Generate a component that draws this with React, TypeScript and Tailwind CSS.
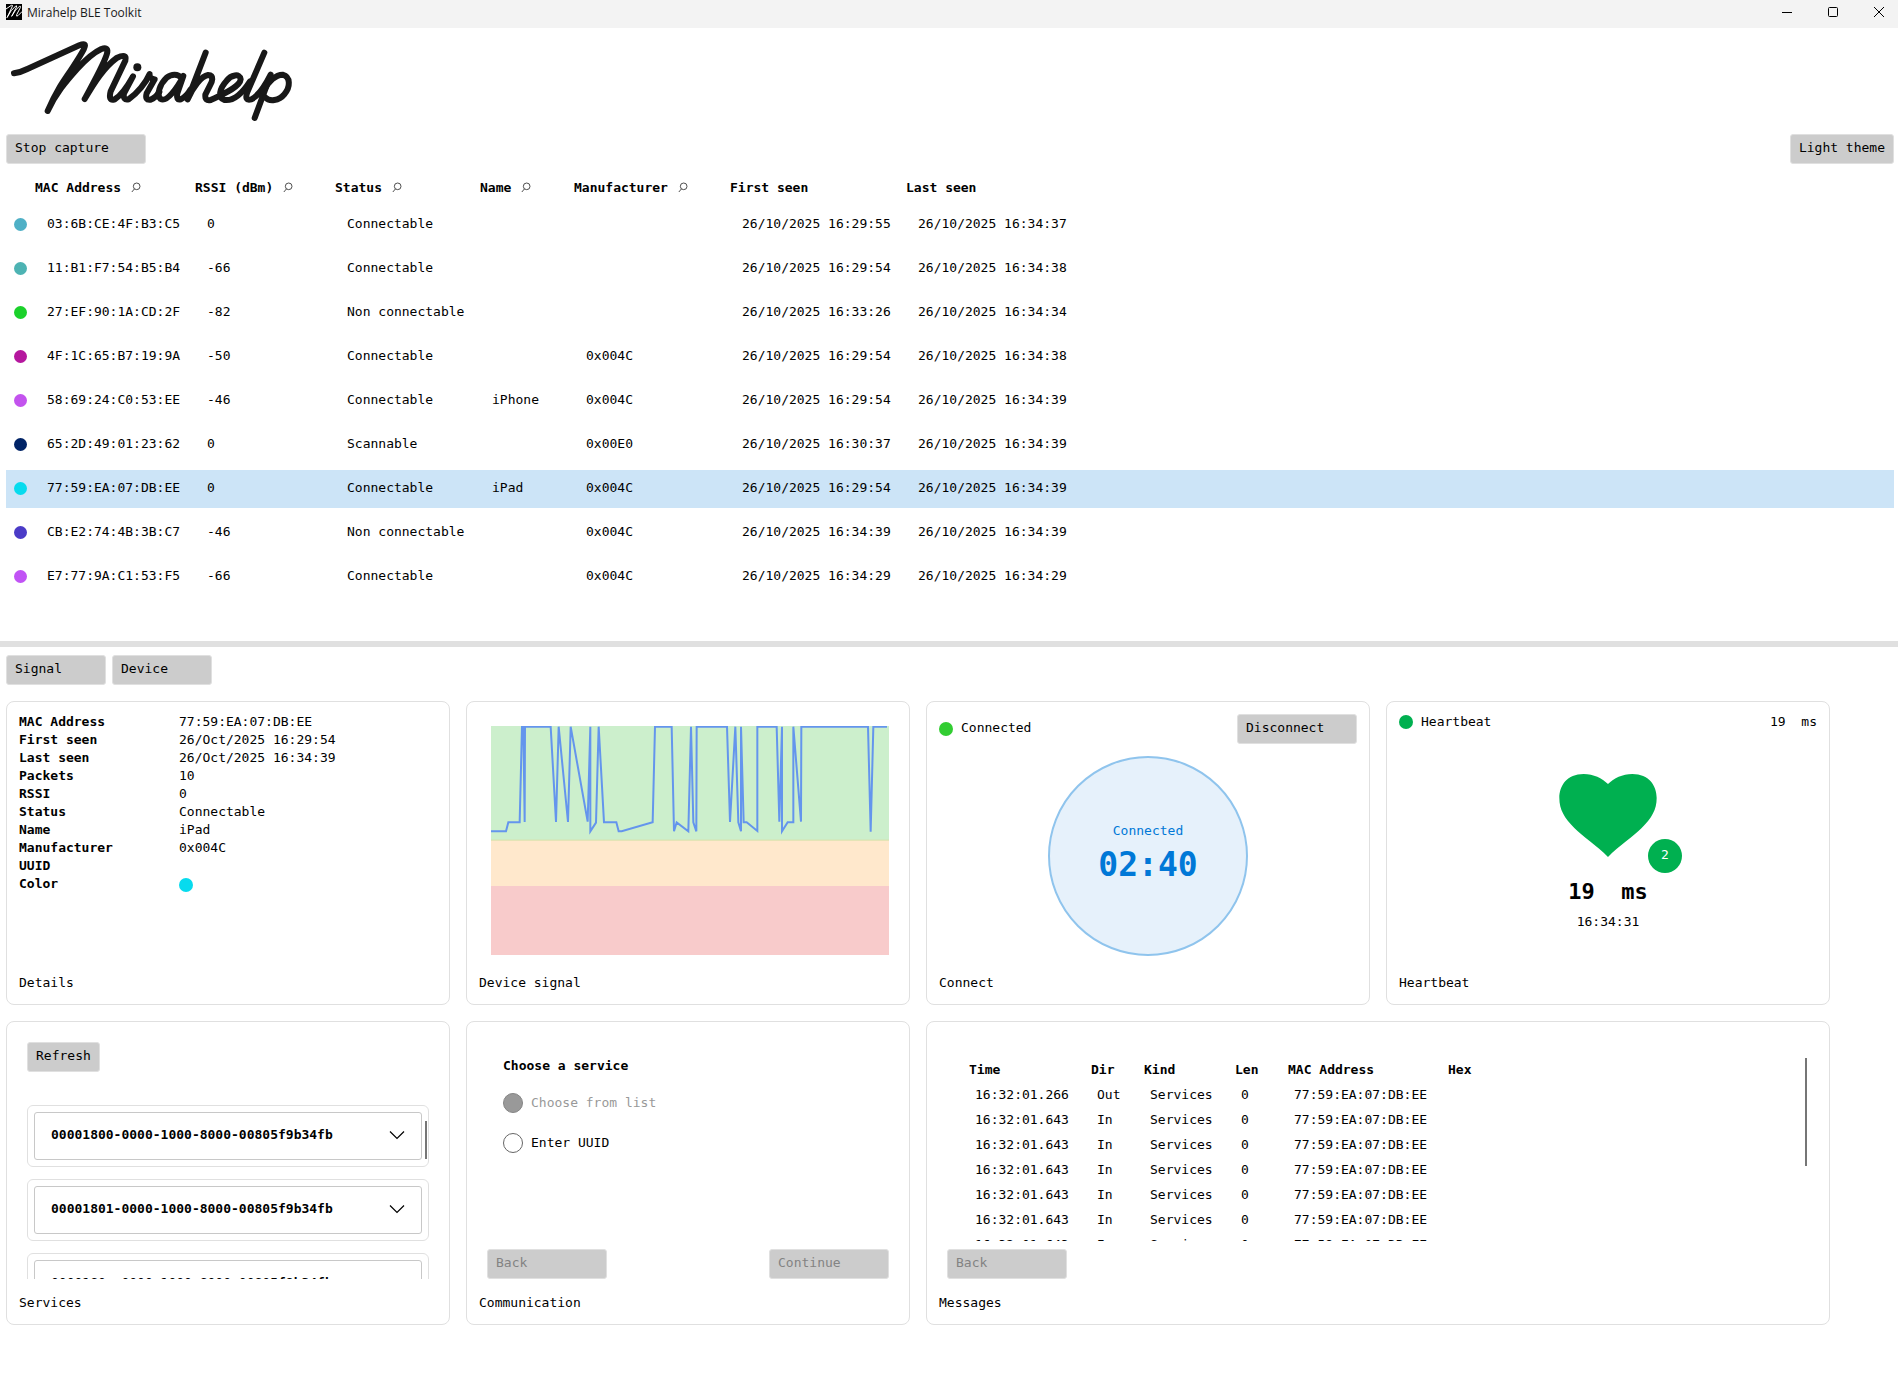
import type { ReactNode } from "react";

const devices = [
  ["#4FB0C6", "03:6B:CE:4F:B3:C5", "0", "Connectable", "", "", "26/10/2025 16:29:55", "26/10/2025 16:34:37"],
  ["#4DB3B3", "11:B1:F7:54:B5:B4", "-66", "Connectable", "", "", "26/10/2025 16:29:54", "26/10/2025 16:34:38"],
  ["#1BD12B", "27:EF:90:1A:CD:2F", "-82", "Non connectable", "", "", "26/10/2025 16:33:26", "26/10/2025 16:34:34"],
  ["#B5179E", "4F:1C:65:B7:19:9A", "-50", "Connectable", "", "0x004C", "26/10/2025 16:29:54", "26/10/2025 16:34:38"],
  ["#C353EE", "58:69:24:C0:53:EE", "-46", "Connectable", "iPhone", "0x004C", "26/10/2025 16:29:54", "26/10/2025 16:34:39"],
  ["#002366", "65:2D:49:01:23:62", "0", "Scannable", "", "0x00E0", "26/10/2025 16:30:37", "26/10/2025 16:34:39"],
  ["#07DBEE", "77:59:EA:07:DB:EE", "0", "Connectable", "iPad", "0x004C", "26/10/2025 16:29:54", "26/10/2025 16:34:39"],
  ["#4B3BC7", "CB:E2:74:4B:3B:C7", "-46", "Non connectable", "", "0x004C", "26/10/2025 16:34:39", "26/10/2025 16:34:39"],
  ["#C153F5", "E7:77:9A:C1:53:F5", "-66", "Connectable", "", "0x004C", "26/10/2025 16:34:29", "26/10/2025 16:34:29"],
];

const columns = [
  { label: "MAC Address", search: true, width: "w-[160px]" },
  { label: "RSSI (dBm)", search: true, width: "w-[140px]" },
  { label: "Status", search: true, width: "w-[145px]" },
  { label: "Name", search: true, width: "w-[94px]" },
  { label: "Manufacturer", search: true, width: "w-[156px]" },
  { label: "First seen", search: false, width: "w-[176px]" },
  { label: "Last seen", search: false, width: "" },
];

const details = [
  ["MAC Address", "77:59:EA:07:DB:EE"],
  ["First seen", "26/Oct/2025 16:29:54"],
  ["Last seen", "26/Oct/2025 16:34:39"],
  ["Packets", "10"],
  ["RSSI", "0"],
  ["Status", "Connectable"],
  ["Name", "iPad"],
  ["Manufacturer", "0x004C"],
  ["UUID", ""],
];

const services = [
  "00001800-0000-1000-8000-00805f9b34fb",
  "00001801-0000-1000-8000-00805f9b34fb",
  "0000180a-0000-1000-8000-00805f9b34fb",
];

const messages = ["16:32:01.266", ...Array(6).fill("16:32:01.643")].map((time, i) => [
  time,
  i === 0 ? "Out" : "In",
  "Services",
  "0",
  "77:59:EA:07:DB:EE",
  "",
]);

const messageColumns = [
  ["Time", "w-[122px]"],
  ["Dir", "w-[53px]"],
  ["Kind", "w-[91px]"],
  ["Len", "w-[53px]"],
  ["MAC Address", "w-[160px]"],
  ["Hex", ""],
];

function Button({ children, className = "", disabled }: { children: ReactNode; className?: string; disabled?: boolean }) {
  return (
    <button
      type="button"
      disabled={disabled}
      className={`h-[30px] rounded-[3px] border border-[#e0e0e0] bg-[#cccccc] px-2 pb-[2px] text-left disabled:text-[#838383] ${className}`}
    >
      {children}
    </button>
  );
}

function Card({ title, className = "", children }: { title: string; className?: string; children: ReactNode }) {
  return (
    <section className={`flex min-h-[304px] min-w-0 flex-col rounded-lg border border-[#e0e0e0] px-3 pt-[11px] pb-3 ${className}`}>
      <div className="flex flex-1 flex-col">{children}</div>
      <h2>{title}</h2>
    </section>
  );
}

function SearchIcon() {
  return (
    <svg width="10" height="11" viewBox="0 0 30 33" fill="none" stroke="#333" strokeWidth="2.6" aria-hidden="true">
      <circle cx="17" cy="13" r="10" />
      <path d="M10.5 20.500L2.500 30" />
    </svg>
  );
}

function Logo() {
  return (
    <svg
      viewBox="18 84 870 300"
      className="h-[100px] w-[290px]"
      fill="none"
      stroke="#181818"
      strokeWidth="18"
      strokeLinecap="round"
      strokeLinejoin="round"
      role="img"
      aria-label="Mirahelp"
    >
      <path d="M42 220Q62 217 82 207L238 136Q262 126 252 146C240 172 192 240 180 260Q160 294 143 333C166 282 196 246 232 206C256 180 280 158 304 147Q324 140 322 156C318 182 278 252 254 297C284 246 312 202 350 174Q382 158 376 182L332 274Q324 304 344 298C364 286 384 256 399 229L372 280Q368 302 386 298C412 280 438 248 449 222C447 234 456 236 464 238L440 280Q434 302 452 299Q466 294 478 276" />
      <path d="M544 234C534 220 514 222 500 233C480 252 468 284 482 297C500 308 532 264 550 228L532 280Q528 302 542 298Q558 292 572 268" />
      <path d="M617 158L563 298C578 262 604 228 624 225C644 226 636 246 630 256L616 284Q614 304 632 300C666 284 720 262 722 238C720 218 692 226 680 242C658 266 652 294 674 300C704 304 732 272 750 244" />
      <path d="M793 158L742 276Q732 304 754 298C774 288 796 256 812 224L764 354" />
      <path d="M790 274C804 244 828 224 848 224C872 230 872 262 852 284C838 302 808 306 796 292" />
      <circle cx="412" cy="202" r="12" fill="#181818" stroke="none" />
    </svg>
  );
}

function AppIcon() {
  return (
    <svg width="16" height="16" viewBox="0 0 48 48" fill="none" aria-hidden="true">
      <rect width="48" height="48" fill="#000" />
      <path
        d="M0 15L16 4Q22 2 18 9L3 41Q15 17 29 6Q34 3 31 10L17 37Q29 15 40 7Q45 5 43 11L32 32Q30 39 36 35L48 23"
        stroke="#fff"
        strokeWidth="3"
        strokeLinecap="round"
        strokeLinejoin="round"
      />
    </svg>
  );
}

function TitleBar() {
  return (
    <header className="flex h-7 items-center bg-[#f3f3f3] pl-1.5">
      <div className="pb-1">
        <AppIcon />
      </div>
      <h1 className="ml-[5px] flex-1 pb-[2px] font-['Open_Sans',sans-serif] text-[12px] leading-4 text-[#1a1a1a]">Mirahelp BLE Toolkit</h1>
      <div className="flex h-full text-black">
        <button type="button" aria-label="Minimize" className="flex w-[46px] items-center justify-center pb-1">
          <svg width="12" height="12" viewBox="0 0 12 12" stroke="currentColor"><path d="M1 6.500H11" /></svg>
        </button>
        <button type="button" aria-label="Maximize" className="flex w-[46px] items-center justify-center pb-1">
          <svg width="12" height="12" viewBox="0 0 12 12" stroke="currentColor" fill="none"><rect x="1.500" y="1.500" width="9" height="9" rx="1" /></svg>
        </button>
        <button type="button" aria-label="Close" className="flex w-[42px] items-center justify-end pr-[13px] pb-1">
          <svg width="12" height="12" viewBox="0 0 12 12" stroke="currentColor"><path d="M1 1L11 11M11 1L1 11" /></svg>
        </button>
      </div>
    </header>
  );
}

function DeviceTable() {
  return (
    <table className="mt-1 w-full table-fixed border-separate border-spacing-x-0 border-spacing-y-1.5 text-left">
      <thead>
        <tr className="h-[26px]">
          <th className="w-[29px]" aria-label="Color" />
          {columns.map((c) => (
            <th key={c.label} className={`px-0 pt-[2px] pb-0 font-bold ${c.width}`}>
              <div className="flex items-center gap-2.5 whitespace-nowrap">
                {c.label}
                {c.search && (
                  <button type="button" className="pb-[2px]" aria-label={`Filter by ${c.label}`}>
                    <SearchIcon />
                  </button>
                )}
              </div>
            </th>
          ))}
        </tr>
      </thead>
      <tbody>
        {devices.map(([color, ...cells]) => (
          <tr key={cells[0]} className={cells[0] === "77:59:EA:07:DB:EE" ? "h-[38px] bg-[#cce4f7]" : "h-[38px]"}>
            <td className="pt-0 pr-0 pb-[2px] pl-2">
              <div className="size-[13px] rounded-full" style={{ backgroundColor: color }} />
            </td>
            {cells.map((cell, i) => (
              <td key={i} className="pt-0 pr-0 pb-[2px] pl-3 whitespace-nowrap">
                {cell}
              </td>
            ))}
          </tr>
        ))}
      </tbody>
    </table>
  );
}

function SignalChart() {
  return (
    <svg viewBox="0 0 1194 687" preserveAspectRatio="none" className="h-[229px] w-full" role="img" aria-label="Device signal">
      <rect width="1194" height="343" fill="#ccefcc" />
      <rect y="343" width="1194" height="137" fill="#ffe8cc" />
      <rect y="341" width="1194" height="3" fill="#d8dfa6" />
      <rect y="480" width="1194" height="207" fill="#f8cbcb" />
      <polyline
        fill="none"
        stroke="#6495ed"
        strokeWidth="6"
        points="0,316 45,316 52,289 86,289 93,2 97,2 101,288 102,2 179,2 195,288 203,2 231,288 239,2 290,287 298,2 298,316 315,290 323,2 339,289 376,289 383,316 392,316 485,289 492,2 542,2 549,316 557,289 592,316 600,2 607,289 616,316 617,2 708,2 717,288 733,2 742,289 750,316 750,2 758,289 767,289 799,315 799,2 857,2 865,287 873,2 873,316 890,289 907,289 907,2 930,287 931,2 1131,2 1139,317 1147,2 1188,2"
      />
    </svg>
  );
}

function ConnectPanel() {
  return (
    <div className="flex flex-col items-center pt-px">
      <div className="flex w-full items-center">
        <span className="size-3.5 rounded-full bg-[#32cd32]" />
        <span className="ml-2 flex-1 pb-[2px]">Connected</span>
        <Button className="w-[120px]">Disconnect</Button>
      </div>
      <div className="mt-3 flex size-[200px] flex-col items-center justify-center rounded-full border-2 border-[#8fc4ed] bg-[#e6f1fb] text-[#0078d7]">
        <span>Connected</span>
        <span className="text-[33px] leading-[50px] font-bold">02:40</span>
      </div>
    </div>
  );
}

function HeartbeatPanel() {
  return (
    <div className="flex flex-col items-center">
      <div className="flex w-full items-center">
        <span className="size-3.5 rounded-full bg-[#00b050]" />
        <span className="ml-2 flex-1">Heartbeat</span>
        <span className="whitespace-pre">19  ms</span>
      </div>
      <div className="relative mt-[43px]">
        <svg width="98" height="83" viewBox="0 0 294 249" fill="#00b050" aria-hidden="true">
          <path d="M147 30C165 13 190 0 220 0C270 0 293 35 293 72C293 108 278 131 248 162C225 186 180 215 147 249C114 215 69 186 46 162C16 131 1 108 1 72C1 35 24 0 74 0C104 0 129 13 147 30Z" />
        </svg>
        <span className="absolute -right-[25px] -bottom-4 flex size-[34px] items-center justify-center rounded-full bg-[#00b050] pb-[2px] text-white">
          2
        </span>
      </div>
      <p className="mt-5 text-[22px] leading-[30px] font-bold whitespace-pre">19  ms</p>
      <p className="mt-[6px]">16:34:31</p>
    </div>
  );
}

function ServicesPanel() {
  return (
    <div className="flex flex-col px-2 pt-[9px]">
      <Button className="self-start">Refresh</Button>
      <div className="relative mt-[33px] h-[174px] overflow-hidden">
        <ul className="flex flex-col gap-3">
          {services.map((uuid) => (
            <li key={uuid} className="rounded-[6px] border border-[#e0e0e0] p-1.5">
              <button
                type="button"
                aria-expanded="false"
                className="flex h-12 w-full items-center justify-between rounded-[3px] border border-[#c8c8c8] px-4 pb-[2px] font-bold"
              >
                {uuid}
                <svg width="16" height="10" viewBox="0 0 16 10" fill="none" stroke="#000" strokeWidth="1.200" aria-hidden="true">
                  <path d="M1 1.500L8 8.500L15 1.500" />
                </svg>
              </button>
            </li>
          ))}
        </ul>
        <div className="absolute top-4 right-[2px] h-[38px] w-[2px] bg-[#767676]" />
      </div>
    </div>
  );
}

function CommunicationPanel() {
  return (
    <div className="flex flex-1 flex-col px-2">
      <fieldset className="flex flex-col px-4 pt-6">
        <legend className="contents font-bold">
          <span className="font-bold">Choose a service</span>
        </legend>
        <label className="mt-[18px] flex items-center gap-2 text-[#999999]">
          <input type="radio" name="source" disabled className="size-5 appearance-none rounded-full border border-[#858585] bg-[#999999]" />
          Choose from list
        </label>
        <label className="mt-5 flex items-center gap-2">
          <input type="radio" name="source" className="size-5 appearance-none rounded-full border border-[#666666] bg-white" />
          Enter UUID
        </label>
      </fieldset>
      <div className="mt-auto mb-[15px] flex justify-between">
        <Button disabled className="w-[120px]">Back</Button>
        <Button disabled className="w-[120px]">Continue</Button>
      </div>
    </div>
  );
}

function MessagesPanel() {
  return (
    <div className="flex flex-1 flex-col px-2 pt-6">
      <div className="relative h-[184px] overflow-hidden pl-[22px]">
        <table className="w-full table-fixed text-left">
          <thead>
            <tr className="h-[26px]">
              {messageColumns.map(([label, width]) => (
                <th key={label} className={`p-0 font-bold ${width}`}>{label}</th>
              ))}
            </tr>
          </thead>
          <tbody>
            {messages.map((row, r) => (
              <tr key={r} className="h-[25px]">
                {row.map((cell, i) => (
                  <td key={i} className="pt-0 pr-0 pb-[2px] pl-1.5">{cell}</td>
                ))}
              </tr>
            ))}
          </tbody>
        </table>
        <div className="absolute top-px right-[2px] h-[108px] w-[2px] bg-[#767676]" />
      </div>
      <div className="mt-auto mb-[15px]">
        <Button disabled className="w-[120px]">Back</Button>
      </div>
    </div>
  );
}

export default function App() {
  return (
    <div className="min-h-screen bg-white font-['DejaVu_Sans_Mono',monospace] text-[13px] leading-[18px] text-black">
      <TitleBar />
      <main>
        <section className="pr-1 pb-[39px] pl-1.5">
          <Logo />
          <div className="mt-1.5 flex justify-between">
            <Button className="w-[140px]">Stop capture</Button>
            <Button>Light theme</Button>
          </div>
          <DeviceTable />
        </section>
        <div role="separator" className="h-1.5 bg-[#e0e0e0]" />
        <section className="pt-2 pr-[68px] pb-6 pl-1.5">
          <nav className="flex gap-1.5">
            <Button className="w-[100px]">Signal</Button>
            <Button className="w-[100px]">Device</Button>
          </nav>
          <div className="mt-4 grid grid-cols-4 gap-4">
            <Card title="Details">
              <dl className="grid grid-cols-[160px_1fr]">
                {details.map(([label, value]) => (
                  <div key={label} className="contents">
                    <dt className="font-bold">{label}</dt>
                    <dd>{value}</dd>
                  </div>
                ))}
                <dt className="font-bold">Color</dt>
                <dd className="flex items-center pt-[2px]">
                  <span className="size-3.5 rounded-full bg-[#07dbee]" />
                </dd>
              </dl>
            </Card>
            <Card title="Device signal">
              <div className="pt-[13px] pr-2 pl-3">
                <SignalChart />
              </div>
            </Card>
            <Card title="Connect">
              <ConnectPanel />
            </Card>
            <Card title="Heartbeat">
              <HeartbeatPanel />
            </Card>
            <Card title="Services">
              <ServicesPanel />
            </Card>
            <Card title="Communication">
              <CommunicationPanel />
            </Card>
            <Card title="Messages" className="col-span-2">
              <MessagesPanel />
            </Card>
          </div>
        </section>
      </main>
    </div>
  );
}
